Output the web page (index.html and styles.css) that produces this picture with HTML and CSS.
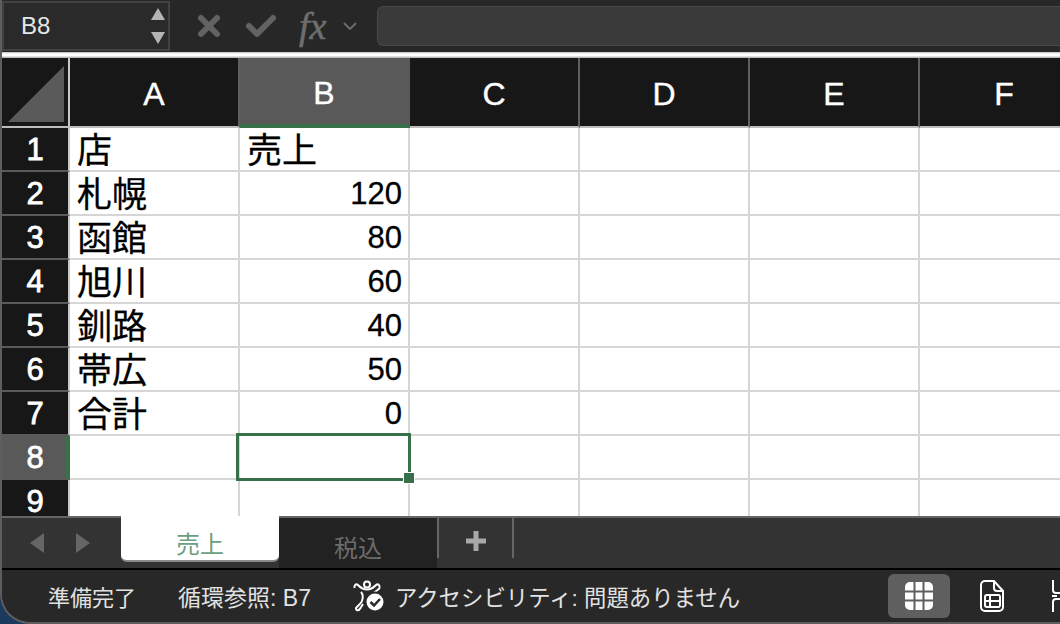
FILE: index.html
```html
<!DOCTYPE html>
<html lang="ja">
<head>
	<meta charset="utf-8">
	<title>売上</title>
	<link rel="stylesheet" href="styles.css">
</head>
<body>
<div class="window">
	<div class="formula-bar">
		<div class="name-box">
			<span>B8</span>
			<div class="spinner">
				<svg width="16" height="13" viewBox="0 0 16 13"><path d="M8 0 15 12H1z"/></svg>
				<svg width="16" height="13" viewBox="0 0 16 13"><path d="M1 0H15L8 12z"/></svg>
			</div>
		</div>
		<svg class="btn-cancel" width="24" height="24" viewBox="0 0 24 24"><path d="M4 4 20 20M20 4 4 20"/></svg>
		<svg class="btn-ok" width="30" height="24" viewBox="0 0 30 24"><path d="M3 12 11 20 27 4"/></svg>
		<span class="fx">fx</span>
		<svg class="chevron" width="14" height="8" viewBox="0 0 14 8"><path d="M1 1 7 7 13 1"/></svg>
		<div class="formula-input"></div>
	</div>
	<div class="divider"></div>

	<div class="sheet">
		<div class="corner"><svg width="56" height="56" viewBox="0 0 56 56"><path d="M56 0V56H0z"/></svg></div>
		<div class="col-head">A</div>
		<div class="col-head active">B</div>
		<div class="col-head">C</div>
		<div class="col-head">D</div>
		<div class="col-head">E</div>
		<div class="col-head">F</div>

		<div class="row-head">1</div>
		<div class="cell">店</div><div class="cell">売上</div><div class="cell"></div><div class="cell"></div><div class="cell"></div><div class="cell"></div>
		<div class="row-head">2</div>
		<div class="cell">札幌</div><div class="cell num">120</div><div class="cell"></div><div class="cell"></div><div class="cell"></div><div class="cell"></div>
		<div class="row-head">3</div>
		<div class="cell">函館</div><div class="cell num">80</div><div class="cell"></div><div class="cell"></div><div class="cell"></div><div class="cell"></div>
		<div class="row-head">4</div>
		<div class="cell">旭川</div><div class="cell num">60</div><div class="cell"></div><div class="cell"></div><div class="cell"></div><div class="cell"></div>
		<div class="row-head">5</div>
		<div class="cell">釧路</div><div class="cell num">40</div><div class="cell"></div><div class="cell"></div><div class="cell"></div><div class="cell"></div>
		<div class="row-head">6</div>
		<div class="cell">帯広</div><div class="cell num">50</div><div class="cell"></div><div class="cell"></div><div class="cell"></div><div class="cell"></div>
		<div class="row-head">7</div>
		<div class="cell">合計</div><div class="cell num">0</div><div class="cell"></div><div class="cell"></div><div class="cell"></div><div class="cell"></div>
		<div class="row-head active">8</div>
		<div class="cell"></div><div class="cell selected"><div class="handle"></div></div><div class="cell"></div><div class="cell"></div><div class="cell"></div><div class="cell"></div>
		<div class="row-head">9</div>
		<div class="cell"></div><div class="cell"></div><div class="cell"></div><div class="cell"></div><div class="cell"></div><div class="cell"></div>
	</div>

	<div class="tab-bar">
		<div class="tab-nav">
			<svg width="14" height="20" viewBox="0 0 14 20"><path d="M14 0V20L0 10z"/></svg>
			<svg width="14" height="20" viewBox="0 0 14 20"><path d="M0 0V20L14 10z"/></svg>
		</div>
		<div class="tab current">売上</div>
		<div class="tab">税込</div>
		<div class="tab-add">
			<svg width="20" height="20" viewBox="0 0 20 20"><path d="M10 0V20M0 10H20"/></svg>
		</div>
	</div>

	<div class="status-bar">
		<span class="status-ready">準備完了</span>
		<span class="status-circular">循環参照: B7</span>
		<svg class="a11y-icon" width="34" height="32" viewBox="0 0 34 32">
			<circle cx="15" cy="4.5" r="3" class="line"/>
			<path class="line" d="M2.500 8C2 5 4 3.500 6 5 8 7 10 9.500 15 9.500S22 7 24 5C26 3.500 28 5 27.500 8 27 10 22 11.500 21 14L20 17M9 12C11 14 11 18 10 21 9 24 5 26 4 28 3.500 31 7 31 8.500 28L11 24"/>
			<circle cx="23" cy="22" r="9.500" class="badge"/>
			<path class="tick" d="M18.500 22 22 25.500 28 19"/>
		</svg>
		<span class="status-a11y">アクセシビリティ: 問題ありません</span>
		<div class="view-btn">
			<svg width="28" height="28" viewBox="0 0 28 28">
				<rect width="28" height="28" rx="5" fill="#fff"/>
				<path class="grid-lines" d="M9.500 0V28M18.500 0V28M0 9.500H28M0 18.500H28"/>
			</svg>
		</div>
		<svg class="page-icon" width="24" height="32" viewBox="0 0 24 32">
			<path class="line" d="M5 1H14L23 11V27A4 4 0 0 1 19 31H5A4 4 0 0 1 1 27V5A4 4 0 0 1 5 1ZM14 1V8A3 3 0 0 0 17 11H23"/>
			<path class="line" d="M7 15H19A2 2 0 0 1 20 17V25A2 2 0 0 1 19 27H7A2 2 0 0 1 5 25V17A2 2 0 0 1 7 15ZM5 21H20M10 15V27"/>
		</svg>
		<svg class="break-icon" width="24" height="32" viewBox="0 0 24 32">
			<path class="line" d="M1 0V10A3 3 0 0 0 4 13H24M1 32V22A3 3 0 0 1 4 19H24"/>
			<path class="dash" d="M0 16H24"/>
		</svg>
	</div>
</div>
</body>
</html>
```
FILE: styles.css
```css
*,
*::before
{
	box-sizing: border-box;
}

html,body
{
	padding: 0;
	margin: 0;
}

body
{
	width: 1060px;
	height: 624px;
	overflow: hidden;
	background: #1b3a5e;
	font-family: "Liberation Sans", "Noto Sans CJK JP", sans-serif;
}

.window
{
	display: flex;
	flex-direction: column;
	height: 624px;
	overflow: hidden;
	border-left: 2px solid #5e5e5e;
	border-bottom: 2px solid #5e5e5e;
	border-bottom-left-radius: 30px;
	background: #282828;
}

/* formula bar */
.formula-bar
{
	display: flex;
	flex: none;
	align-items: center;
	height: 52px;
	background: #272727;
}

.name-box
{
	display: flex;
	flex: none;
	align-items: center;
	justify-content: space-between;
	width: 168px;
	height: 50px;
	padding: 0 2px 0 17px;
	border: 2px solid #424242;
	background: #2a2a2a;
	color: #e6e6e6;
	font-size: 24px;
}

.spinner
{
	display: flex;
	flex-direction: column;
	gap: 11px;
}

.spinner svg
{
	display: block;
	fill: #b4b4b4;
}

.btn-cancel,
.btn-ok
{
	flex: none;
	fill: none;
	stroke: #626262;
	stroke-linecap: round;
	stroke-linejoin: round;
	stroke-width: 6;
}

.btn-cancel
{
	margin-left: 27px;
}

.btn-ok
{
	margin-left: 25px;
}

.fx
{
	flex: none;
	margin-left: 23px;
	color: #6e6e6e;
	font-family: "Liberation Serif", serif;
	font-size: 38px;
	font-style: italic;
	line-height: 1;
	-webkit-text-stroke: 0.6px #6e6e6e;
}

.chevron
{
	flex: none;
	margin-left: 17px;
	fill: none;
	stroke: #6a6a6a;
	stroke-width: 2;
}

.formula-input
{
	flex: 1;
	height: 40px;
	margin-left: 20px;
	border: 1px solid #484848;
	border-right: 0;
	border-top-left-radius: 6px;
	border-bottom-left-radius: 6px;
	background: #3a3a3a;
}

.divider
{
	flex: none;
	height: 6px;
	background: linear-gradient(#b8b8b8, #fff 30%, #fff 60%, #a8a8a8);
}

/* sheet */
.sheet
{
	display: grid;
	flex: none;
	grid-template-columns: 68px repeat(6, 170px);
	grid-template-rows: 70px repeat(9, 44px);
	height: 458px;
	overflow: hidden;
	background: #fff;
}

.corner
{
	display: flex;
	align-items: flex-end;
	justify-content: flex-end;
	padding: 0 4px 4px 0;
	border-right: 2px solid #c8c8c8;
	border-bottom: 2px solid #bdbdbd;
	background: #171717;
}

.corner svg
{
	display: block;
	fill: #5a5a5a;
}

.col-head
{
	display: flex;
	align-items: center;
	justify-content: center;
	padding-top: 5px;
	border-right: 2px solid #5e5e5e;
	border-bottom: 2px solid #bdbdbd;
	background: #171717;
	color: #fff;
	font-size: 32px;
	-webkit-text-stroke: 0.4px #fff;
}

.col-head.active
{
	border-right-color: #595959;
	border-bottom: 4px solid #38704a;
	background: #595959;
}

.row-head
{
	display: flex;
	align-items: center;
	justify-content: center;
	padding-top: 1px;
	border-right: 2px solid #c8c8c8;
	border-bottom: 2px solid #5a5a5a;
	background: #171717;
	color: #fff;
	font-size: 31px;
	-webkit-text-stroke: 0.8px #fff;
}

.row-head.active
{
	padding-left: 2px;
	border-right: 4px solid #38704a;
	background: #595959;
}

.cell
{
	display: flex;
	align-items: center;
	padding: 0 6px 4px 7px;
	border-right: 2px solid #d6d6d6;
	border-bottom: 2px solid #d6d6d6;
	color: #000;
	font-size: 35px;
	white-space: nowrap;
	-webkit-text-stroke: 0.3px #000;
}

.cell.num
{
	justify-content: flex-end;
	padding: 2px 6px 0 8px;
	font-size: 31px;
}

.cell.selected
{
	position: relative;
}

.cell.selected::before
{
	position: absolute;
	top: -3px;
	left: -4px;
	width: 175px;
	height: 48px;
	border: 3px solid #38704a;
	content: "";
}

.handle
{
	position: absolute;
	top: 37px;
	left: 164px;
	width: 10px;
	height: 10px;
	outline: 1px solid #fff;
	background: #38704a;
}

/* sheet tabs */
.tab-bar
{
	display: flex;
	flex: none;
	height: 52px;
	border-top: 2px solid #666;
	background: #333;
}

.tab-nav
{
	display: flex;
	flex: none;
	align-items: center;
	gap: 32px;
	width: 119px;
	padding: 0 0 0 28px;
	fill: #666;
}

.tab
{
	display: flex;
	flex: none;
	align-items: center;
	justify-content: center;
	width: 158px;
	padding-top: 6px;
	background: #222;
	color: #6c6c6c;
	font-size: 24px;
}

.tab.current
{
	height: 46px;
	margin-top: -2px;
	padding-top: 8px;
	border-bottom: 2px solid #8a8a8a;
	border-radius: 0 0 6px 6px;
	background: #fff;
	color: #6d9e7f;
}

.tab-add
{
	display: flex;
	flex: none;
	align-items: center;
	justify-content: center;
	width: 77px;
	height: 40px;
	padding-top: 6px;
	border-right: 2px solid #666;
	border-left: 2px solid #666;
	fill: none;
	stroke: #a8a8a8;
	stroke-width: 5;
}

/* status bar */
.status-bar
{
	display: flex;
	flex: 1;
	align-items: center;
	overflow: hidden;
	border-top: 2px solid #000;
	background: #282828;
	color: #e2e2e2;
	font-size: 22px;
	white-space: nowrap;
}

.status-ready
{
	flex: none;
	margin-left: 46px;
}

.status-circular
{
	flex: none;
	margin-left: 42px;
	font-size: 23px;
}

.status-a11y
{
	flex: none;
	margin-left: 9px;
	font-size: 22.4px;
}

.a11y-icon
{
	flex: none;
	margin-left: 41px;
}

.line
{
	fill: none;
	stroke: #fff;
	stroke-width: 2;
}

.badge
{
	fill: #fff;
	stroke: #282828;
	stroke-width: 2;
}

.tick
{
	fill: none;
	stroke: #282828;
	stroke-width: 2.500;
}

.view-btn
{
	display: flex;
	flex: none;
	align-items: center;
	justify-content: center;
	width: 62px;
	height: 44px;
	margin-left: 148px;
	border-radius: 6px;
	background: #5f5f5f;
}

.grid-lines
{
	fill: none;
	stroke: #5f5f5f;
	stroke-width: 2;
}

.page-icon
{
	flex: none;
	margin-left: 30px;
}

.break-icon
{
	flex: none;
	margin-left: 48px;
}

.dash
{
	fill: none;
	stroke: #fff;
	stroke-dasharray: 5 3;
	stroke-width: 2;
}
```
